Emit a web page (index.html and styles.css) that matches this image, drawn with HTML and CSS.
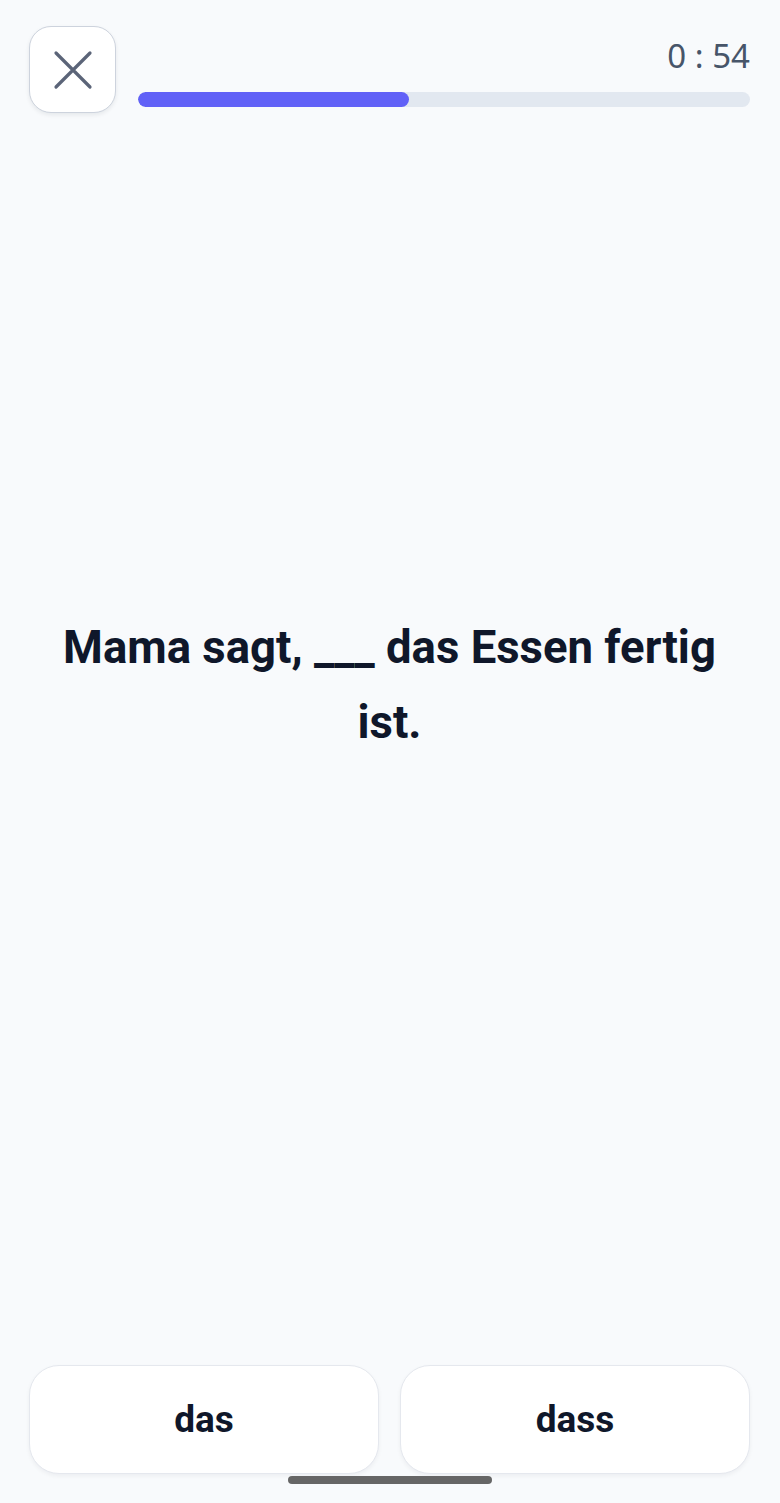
FILE: index.html
```html
<!DOCTYPE html>
<html lang="de">
<head>
    <meta charset="UTF-8">
    <title>Quiz</title>
    <link rel="stylesheet" href="styles.css">
</head>
<body>
    <div class="screen">
        <!-- Top bar -->
        <div class="topbar">
            <button class="close-btn" aria-label="Schließen">
                <svg width="40" height="40" viewBox="0 0 40 40">
                    <path d="M3 3 L37 37 M37 3 L3 37" stroke="#5b6478" stroke-width="3.2" stroke-linecap="round" fill="none"/>
                </svg>
            </button>
            <div class="progress-wrap">
                <div class="timer">0 : 54</div>
                <div class="progress">
                    <div class="progress-fill" style="width: 44.3%"></div>
                </div>
            </div>
        </div>

        <!-- Question -->
        <div class="question">
            <p>Mama sagt, ___ das Essen fertig ist.</p>
        </div>

        <!-- Answers -->
        <div class="answers">
            <button class="answer">das</button>
            <button class="answer">dass</button>
        </div>

        <div class="home-indicator"></div>
    </div>
</body>
</html>
```

FILE: styles.css
```css
body {
    margin: 0;
    padding: 0;
    background-color: #f8fafc;
    font-family: Roboto, "Liberation Sans", sans-serif;
    color: #0f172a;
}

.screen {
    position: relative;
    height: 1503px;
    display: flex;
    flex-direction: column;
    box-sizing: border-box;
    padding: 26px 30px 29px 29px;
}

/* Top bar */
.topbar {
    display: flex;
    align-items: flex-end;
    gap: 22px;
}

.close-btn {
    width: 87px;
    height: 87px;
    flex: none;
    display: flex;
    align-items: center;
    justify-content: center;
    background: #fff;
    border: 1.5px solid #cdd3dd;
    border-radius: 22px;
    box-shadow: 0 2px 4px rgba(15, 23, 42, 0.08);
    padding: 0;
}

.close-btn svg {
    width: 40px;
    height: 40px;
}

.progress-wrap {
    flex: 1;
    display: flex;
    flex-direction: column;
    align-items: flex-end;
    padding-bottom: 6px;
}

.timer {
    font-family: "Noto Sans", "Open Sans", sans-serif;
    font-size: 33px;
    color: #475569;
    line-height: 1;
    margin-bottom: 20px;
}

.progress {
    width: 100%;
    height: 15px;
    background: #e2e8f0;
    border-radius: 8px;
    overflow: hidden;
}

.progress-fill {
    height: 100%;
    background: #6161f7;
    border-radius: 8px;
}

/* Question */
.question {
    flex: 1;
    display: flex;
    align-items: center;
    justify-content: center;
    padding: 0 20px;
}

.question p {
    margin: 0 0 108px 0;
    font-size: 45.5px;
    font-weight: 700;
    line-height: 75px;
    text-align: center;
}

/* Answers */
.answers {
    display: grid;
    grid-template-columns: 1fr 1fr;
    gap: 21px;
}

.answer {
    height: 109px;
    background: #fff;
    border: 1.5px solid #e5e8ee;
    border-radius: 30px;
    box-shadow: 0 2px 4px rgba(15, 23, 42, 0.05);
    font-family: Roboto, "Liberation Sans", sans-serif;
    font-size: 37px;
    font-weight: 700;
    color: #0f172a;
}

.home-indicator {
    position: absolute;
    left: 288px;
    bottom: 19px;
    width: 204px;
    height: 8px;
    border-radius: 4px;
    background: #666;
}
```
